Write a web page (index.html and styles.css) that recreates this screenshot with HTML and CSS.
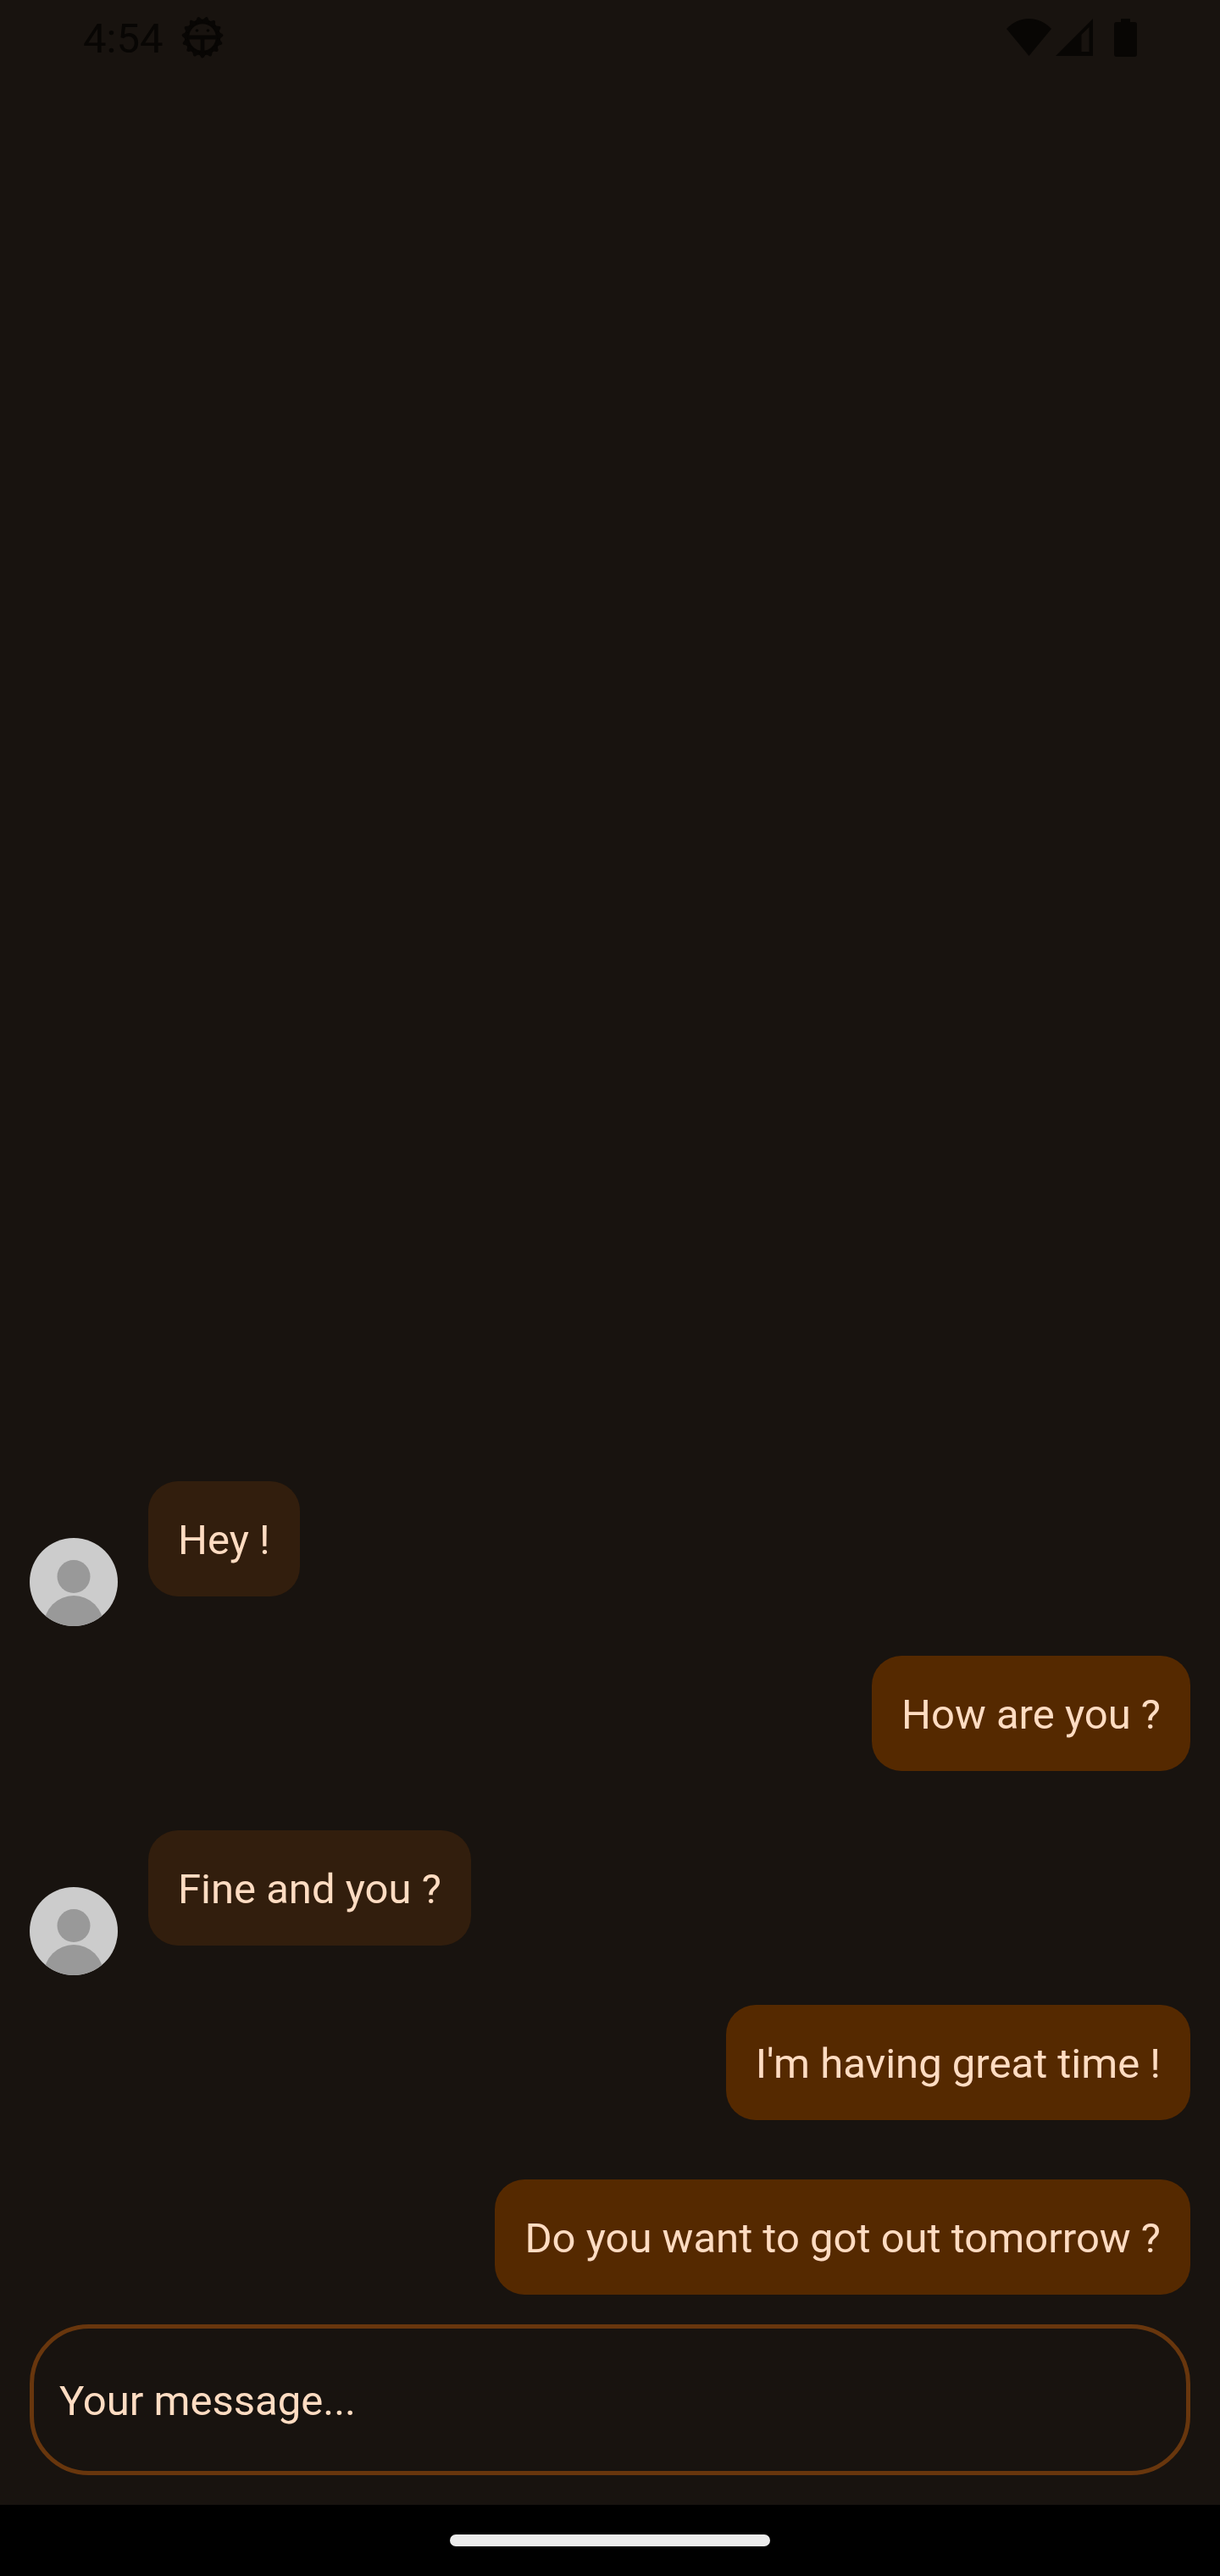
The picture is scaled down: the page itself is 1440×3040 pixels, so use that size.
FILE: index.html
```html
<!DOCTYPE html>
<html lang="en">
<head>
<meta charset="utf-8">
<meta name="viewport" content="width=device-width, initial-scale=1">
<title>Chat</title>
<link rel="stylesheet" href="styles.css">
</head>
<body>
<header class="status">
  <div class="status-group">
    <time class="clock">4:54</time>
    <svg class="gear" viewBox="-25 -25 50 50" fill="currentColor" stroke="currentColor">
      <circle r="18.500" fill="none" stroke-width="5.4"/>
      <path id="tooth" d="M-2.500 19 0 22.600 2.500 19Z" stroke-width="3.600" stroke-linejoin="round"/>
      <use href="#tooth" transform="rotate(24)"/>
      <use href="#tooth" transform="rotate(48)"/>
      <use href="#tooth" transform="rotate(72)"/>
      <use href="#tooth" transform="rotate(96)"/>
      <use href="#tooth" transform="rotate(120)"/>
      <use href="#tooth" transform="rotate(144)"/>
      <use href="#tooth" transform="rotate(168)"/>
      <use href="#tooth" transform="rotate(192)"/>
      <use href="#tooth" transform="rotate(216)"/>
      <use href="#tooth" transform="rotate(240)"/>
      <use href="#tooth" transform="rotate(264)"/>
      <use href="#tooth" transform="rotate(288)"/>
      <use href="#tooth" transform="rotate(312)"/>
      <use href="#tooth" transform="rotate(336)"/>
      <path d="M-17 0H17M0 0V17" fill="none" stroke-width="4.8"/>
      <circle cx="-6.5" cy="-8" r="1.8" stroke="none"/>
      <circle cx="6.5" cy="-8" r="1.8" stroke="none"/>
    </svg>
  </div>
  <div class="status-group status-right">
    <svg class="wifi" viewBox="0 0 53 44" fill="currentColor"><path d="M0 12C15-4 38-4 53 12L26.500 44Z"/></svg>
    <svg class="cell" viewBox="0 0 44 44" fill="currentColor"><path fill-rule="evenodd" d="M0 44 44 0V44ZM30.500 19V39H39.500V10Z"/></svg>
    <svg class="battery" viewBox="0 0 27 45" fill="currentColor"><path d="M8 0H19V4H24Q27 4 27 7V42Q27 45 24 45H3Q0 45 0 42V7Q0 4 3 4H8Z"/></svg>
  </div>
</header>
<main class="chat">
  <ol class="messages">
    <li class="message">
      <svg class="avatar" viewBox="0 0 104 104" role="img" aria-label="Contact">
        <circle cx="52" cy="45.500" r="19.500"/>
        <circle cx="52" cy="103" r="35"/>
      </svg>
      <p class="bubble">Hey !</p>
    </li>
    <li class="message sent"><p class="bubble">How are you ?</p></li>
    <li class="message">
      <svg class="avatar" viewBox="0 0 104 104" role="img" aria-label="Contact">
        <circle cx="52" cy="45.500" r="19.500"/>
        <circle cx="52" cy="103" r="35"/>
      </svg>
      <p class="bubble">Fine and you ?</p>
    </li>
    <li class="message sent"><p class="bubble">I'm having great time !</p></li>
    <li class="message sent"><p class="bubble">Do you want to got out tomorrow ?</p></li>
  </ol>
  <form class="composer">
    <input class="field" type="text" placeholder="Your message..." aria-label="Your message">
  </form>
</main>
<footer class="nav"><div class="handle"></div></footer>
</body>
</html>
```
FILE: styles.css
```css
* {
  box-sizing: border-box;
}

body {
  margin: 0;
  min-height: 100vh;
  display: flex;
  flex-direction: column;
  background: #18130f;
  color: #ffdcc2;
  font: 49px/66px Roboto, sans-serif;
}

.status {
  display: flex;
  justify-content: space-between;
  align-items: center;
  height: 88px;
  padding: 0 98px;
  color: #080604;
}

.status-group {
  display: flex;
  align-items: center;
  gap: 22px;
}

.status-right {
  gap: 5px;
}

.clock {
  padding-top: 3px;
}

.gear {
  width: 50px;
  height: 50px;
}

.wifi {
  width: 53px;
  height: 44px;
}

.cell {
  width: 44px;
  height: 44px;
}

.battery {
  width: 27px;
  height: 45px;
  margin-left: 20px;
}

.chat {
  flex: 1;
  display: flex;
  flex-direction: column;
  justify-content: flex-end;
}

.messages {
  list-style: none;
  margin: 0;
  padding: 0;
}

.message {
  display: flex;
  align-items: flex-end;
  gap: 36px;
  padding: 35px 35px 0;
}

.sent {
  justify-content: flex-end;
}

.avatar {
  width: 104px;
  height: 104px;
  border-radius: 50%;
  background: #ccc;
  fill: #999;
}

.bubble {
  margin: 0 0 35px;
  padding: 37px 35px 33px;
  border-radius: 35px;
  background: #321e0d;
}

.sent .bubble {
  background: #552900;
}

.composer {
  padding: 0 35px 35px;
}

.field {
  display: block;
  width: 100%;
  height: 178px;
  padding: 3px 30px 0;
  border: 5px solid #68360d;
  border-radius: 70px;
  background: transparent;
  color: inherit;
  font: inherit;
}

.field::placeholder {
  color: inherit;
  opacity: 1;
}

.nav {
  display: flex;
  justify-content: center;
  align-items: center;
  height: 84px;
  background: #000;
}

.handle {
  width: 378px;
  height: 14px;
  border-radius: 7px;
  background: #ebebeb;
}
```
